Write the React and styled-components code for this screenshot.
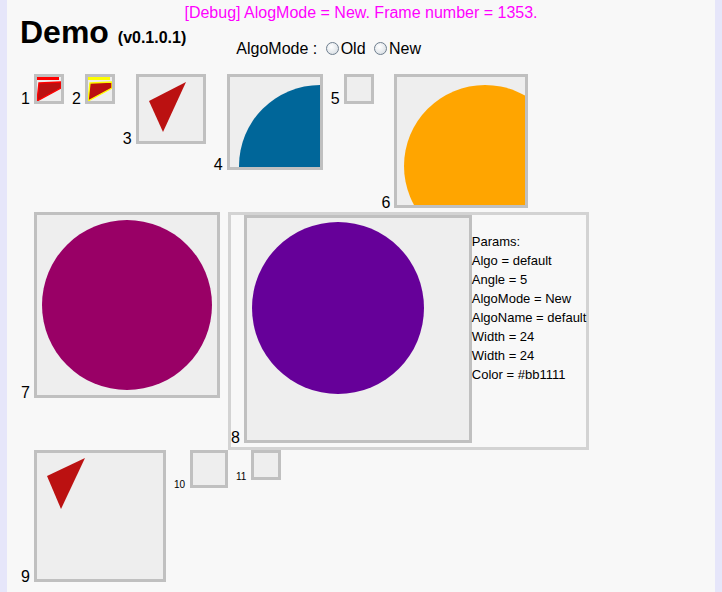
import React from "react";
import styled, { createGlobalStyle } from "styled-components";

const GlobalStyle = createGlobalStyle`
  html, body {
    margin: 0;
    padding: 0;
    background: #e6e6fa;
  }
  body {
    font-family: "Liberation Sans", Arial, sans-serif;
    font-size: 16px;
    color: #000;
  }
`;

const Page = styled.div`
  width: 708px;
  margin: 0 auto;
  min-height: 100vh;
  background: #f8f8f8;
`;

const Debug = styled.div`
  padding-top: 5px;
  line-height: 15px;
  text-align: center;
  color: #ff00ff;
`;

const Content = styled.div`
  padding-left: 14px;
`;

const Header = styled.div`
  display: flex;
  align-items: flex-start;
`;

const Title = styled.h1`
  margin: 0 0 0 -1px;
  font-size: 32px;
  font-weight: bold;
  line-height: 24px;
  white-space: nowrap;
`;

const Version = styled.span`
  font-size: 16px;
`;

const AlgoGroup = styled.div`
  margin: 19px 0 0 50px;
  line-height: 20px;
  white-space: nowrap;
`;

const Radio = styled.input.attrs({ type: "radio" })`
  appearance: none;
  display: inline-block;
  box-sizing: border-box;
  width: 13px;
  height: 13px;
  margin: 0 2px 0 4px;
  vertical-align: -1px;
  border: 1px solid #6f7f8f;
  border-radius: 50%;
  background: radial-gradient(circle at 40% 35%, #ffffff 0%, #e4e8ec 60%, #cfd5db 100%);
`;

const Gallery = styled.div`
  display: flex;
  flex-wrap: wrap;
  align-items: flex-start;
  column-gap: 8px;
  margin-top: 15px;
`;

const Item = styled.div`
  white-space: nowrap;
  font-size: 16px;
  line-height: normal;
`;

const Label = styled.span`
  font-size: ${(p) => (p.$small ? "10px" : "16px")};
  margin-right: ${(p) => (p.$small ? "5px" : "4px")};
`;

const Canvas = styled.div`
  display: inline-block;
  vertical-align: baseline;
  width: ${(p) => p.$size}px;
  height: ${(p) => p.$size}px;
  border: 3px solid #c0c0c0;
  background: #eeeeee;
  overflow: hidden;

  & > svg {
    display: block;
  }
`;

const ParamsItem = styled.div`
  display: flex;
  align-items: flex-start;
  border: 3px solid #d3d3d3;
  white-space: nowrap;
  font-size: 16px;
  line-height: normal;
`;

const Params = styled.div`
  padding-top: 17px;
  font-size: 13px;
  line-height: 19px;
`;

const Flag = ({ color }) => (
  <>
    <rect x="0" y="0" width="22" height="3" fill={color} />
    <polygon
      points="2,6 24,5 24,11 0,24"
      fill="#bb1111"
      stroke={color}
      strokeWidth="1.4"
    />
  </>
);

const Shape = ({ item }) => {
  const { size } = item;
  let content = null;
  if (item.kind === "flag") content = <Flag color={item.color} />;
  if (item.kind === "tri") content = <polygon points={item.points} fill="#bb1111" />;
  if (item.kind === "circle")
    content = <circle cx={item.cx} cy={item.cy} r={item.r} fill={item.fill} />;
  return (
    <svg width={size} height={size} viewBox={`0 0 ${size} ${size}`}>
      {content}
    </svg>
  );
};

const items = [
  { n: 1, size: 24, kind: "flag", color: "#ff0000" },
  { n: 2, size: 24, kind: "flag", color: "#ffff00" },
  { n: 3, size: 64, kind: "tri", points: "10,24 47,5 24,55" },
  { n: 4, size: 90, kind: "circle", cx: 90, cy: 89, r: 81, fill: "#006699" },
  { n: 5, size: 24 },
  { n: 6, size: 128, kind: "circle", cx: 88, cy: 89, r: 81, fill: "#ffa500" },
  { n: 7, size: 180, kind: "circle", cx: 90, cy: 90, r: 85, fill: "#990066" },
  { n: 8, size: 222, kind: "circle", cx: 91, cy: 90, r: 86, fill: "#660099", params: true },
  { n: 9, size: 126, kind: "tri", points: "10,23 48,5 24,56" },
  { n: 10, size: 32, small: true },
  { n: 11, size: 24, small: true },
];

const paramLines = [
  "Params:",
  "Algo = default",
  "Angle = 5",
  "AlgoMode = New",
  "AlgoName = default",
  "Width = 24",
  "Width = 24",
  "Color = #bb1111",
];

const Drawing = ({ item }) => (
  <span>
    <Label $small={item.small}>{item.n}</Label>
    <Canvas $size={item.size}>
      <Shape item={item} />
    </Canvas>
  </span>
);

export default function App() {
  return (
    <>
      <GlobalStyle />
      <Page>
        <Debug>[Debug] AlogMode = New. Frame number = 1353.</Debug>
        <Content>
          <Header>
            <Title>
              Demo <Version>(v0.1.0.1)</Version>
            </Title>
            <AlgoGroup>
              AlgoMode :{" "}
              <label>
                <Radio name="algomode" />
                Old
              </label>{" "}
              <label>
                <Radio name="algomode" />
                New
              </label>
            </AlgoGroup>
          </Header>
          <Gallery>
            {items.map((item) =>
              item.params ? (
                <ParamsItem key={item.n}>
                  <Item>
                    <Drawing item={item} />
                  </Item>
                  <Params>
                    {paramLines.map((l, i) => (
                      <div key={i}>{l}</div>
                    ))}
                  </Params>
                </ParamsItem>
              ) : (
                <Item key={item.n}>
                  <Drawing item={item} />
                </Item>
              )
            )}
          </Gallery>
        </Content>
      </Page>
    </>
  );
}
